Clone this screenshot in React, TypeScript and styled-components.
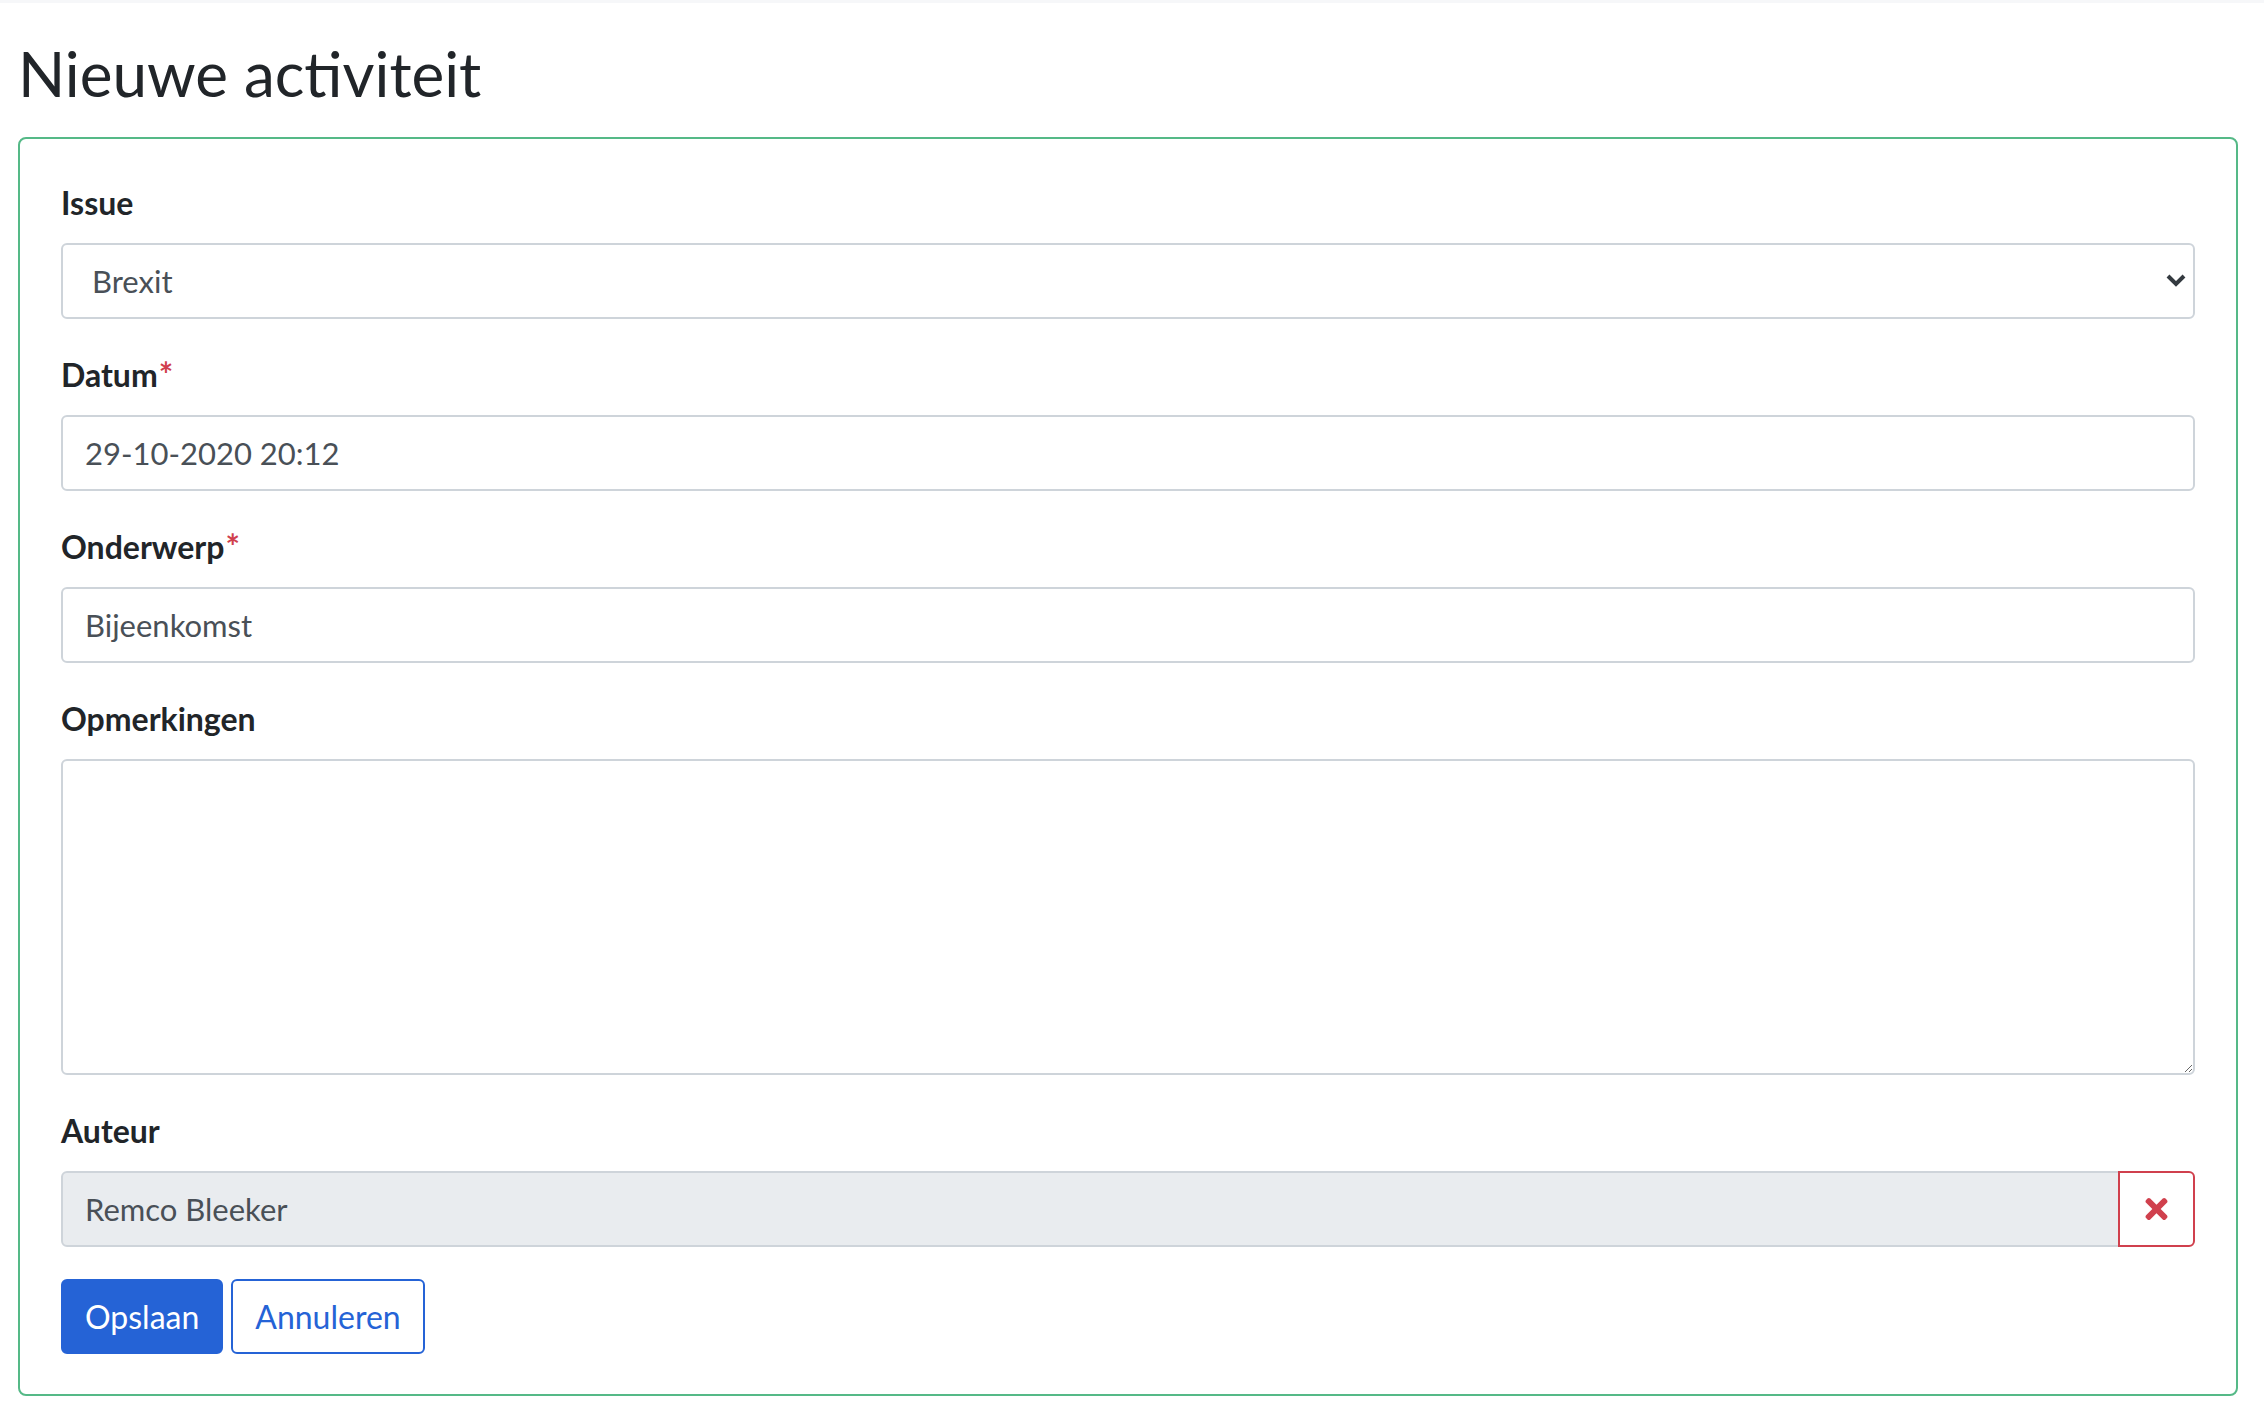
import React from 'react'
import styled, { createGlobalStyle } from 'styled-components'
import { FaTimes } from 'react-icons/fa'

const GlobalStyle = createGlobalStyle`
    body {
        margin: 0;
        background-color: #fff;
        font-family: Lato, "Noto Sans", sans-serif;
        color: #212529;
    }
`

const TopBar = styled.div`
    height: 3px;
    background-color: #f6f7f9;
`

const Page = styled.main`
    padding: 0 26px 0 18px;
`

const Title = styled.h1`
    font-size: 62px;
    font-weight: 400;
    line-height: 1.2;
    margin: 33px 0 27px;
    color: #212529;
`

const Card = styled.form`
    border: 2px solid #55b987;
    border-radius: 8px;
    padding: 40px 41px;
`

const FormGroup = styled.div`
    margin-bottom: 32px;
`

const Label = styled.label`
    display: block;
    font-size: 32px;
    font-weight: 700;
    line-height: 48px;
    margin-bottom: 16px;
`

const Required = styled.span`
    display: inline-block;
    color: #d0404d;
    font-size: 34px;
    line-height: 1;
    vertical-align: top;
    margin: 6px 0 0 1px;
`

const fieldBase = `
    box-sizing: border-box;
    width: 100%;
    border: 2px solid #ced4da;
    border-radius: 6px;
    font-family: Lato, "Noto Sans", sans-serif;
    font-size: 31px;
    color: #495057;
    background-color: #fff;
    outline: none;
`

const Input = styled.input<{ $grouped?: boolean }>`
    ${fieldBase}
    display: block;
    height: 76px;
    padding: 0 22px;
    ${p => p.$grouped && `
        flex: 1;
        background-color: #e9ecef;
        border-radius: 6px 0 0 6px;
    `}
`

const SelectWrap = styled.div`
    position: relative;
`

const Select = styled.select`
    ${fieldBase}
    display: block;
    height: 76px;
    padding: 0 60px 0 29px;
    appearance: none;
    -webkit-appearance: none;
`

const Chevron = styled.svg`
    position: absolute;
    right: 8px;
    top: 28px;
    width: 22px;
    height: 18px;
    pointer-events: none;
`

const TextArea = styled.textarea`
    ${fieldBase}
    display: block;
    height: 316px;
    padding: 12px 22px;
    resize: vertical;
`

const InputGroup = styled.div`
    display: flex;
`

const ClearButton = styled.button`
    width: 77px;
    height: 76px;
    flex: none;
    display: flex;
    align-items: center;
    justify-content: center;
    margin-left: -2px;
    background-color: #fff;
    border: 2px solid #d0404d;
    border-radius: 0 6px 6px 0;
    color: #d0404d;
    padding: 0;
    svg {
        width: 23px;
        height: 32px;
    }
`

const Actions = styled.div`
    display: flex;
    gap: 8px;
`

const Button = styled.button<{ $outline?: boolean }>`
    height: 75px;
    padding: 0 22px;
    border-radius: 6px;
    font-family: Lato, "Noto Sans", sans-serif;
    font-size: 32px;
    border: 2px solid #2563d6;
    background-color: ${p => (p.$outline ? '#fff' : '#2563d6')};
    color: ${p => (p.$outline ? '#2563d6' : '#fff')};
`

const App: React.FC = () => {
    return (
        <>
            <GlobalStyle />
            <TopBar />
            <Page>
                <Title>Nieuwe activiteit</Title>
                <Card onSubmit={e => e.preventDefault()}>
                    <FormGroup>
                        <Label htmlFor="issue">Issue</Label>
                        <SelectWrap>
                            <Select id="issue" defaultValue="brexit">
                                <option value="brexit">Brexit</option>
                            </Select>
                            <Chevron viewBox="0 0 22 18">
                                <path d="M3 5l8 8 8-8" fill="none" stroke="#343a40" strokeWidth="4" />
                            </Chevron>
                        </SelectWrap>
                    </FormGroup>
                    <FormGroup>
                        <Label htmlFor="datum">Datum<Required>*</Required></Label>
                        <Input id="datum" type="text" defaultValue="29-10-2020 20:12" />
                    </FormGroup>
                    <FormGroup>
                        <Label htmlFor="onderwerp">Onderwerp<Required>*</Required></Label>
                        <Input id="onderwerp" type="text" defaultValue="Bijeenkomst" />
                    </FormGroup>
                    <FormGroup>
                        <Label htmlFor="opmerkingen">Opmerkingen</Label>
                        <TextArea id="opmerkingen" />
                    </FormGroup>
                    <FormGroup>
                        <Label htmlFor="auteur">Auteur</Label>
                        <InputGroup>
                            <Input id="auteur" type="text" readOnly $grouped defaultValue="Remco Bleeker" />
                            <ClearButton type="button" aria-label="Auteur wissen"><FaTimes /></ClearButton>
                        </InputGroup>
                    </FormGroup>
                    <Actions>
                        <Button type="submit">Opslaan</Button>
                        <Button type="button" $outline>Annuleren</Button>
                    </Actions>
                </Card>
            </Page>
        </>
    )
}

export default App
